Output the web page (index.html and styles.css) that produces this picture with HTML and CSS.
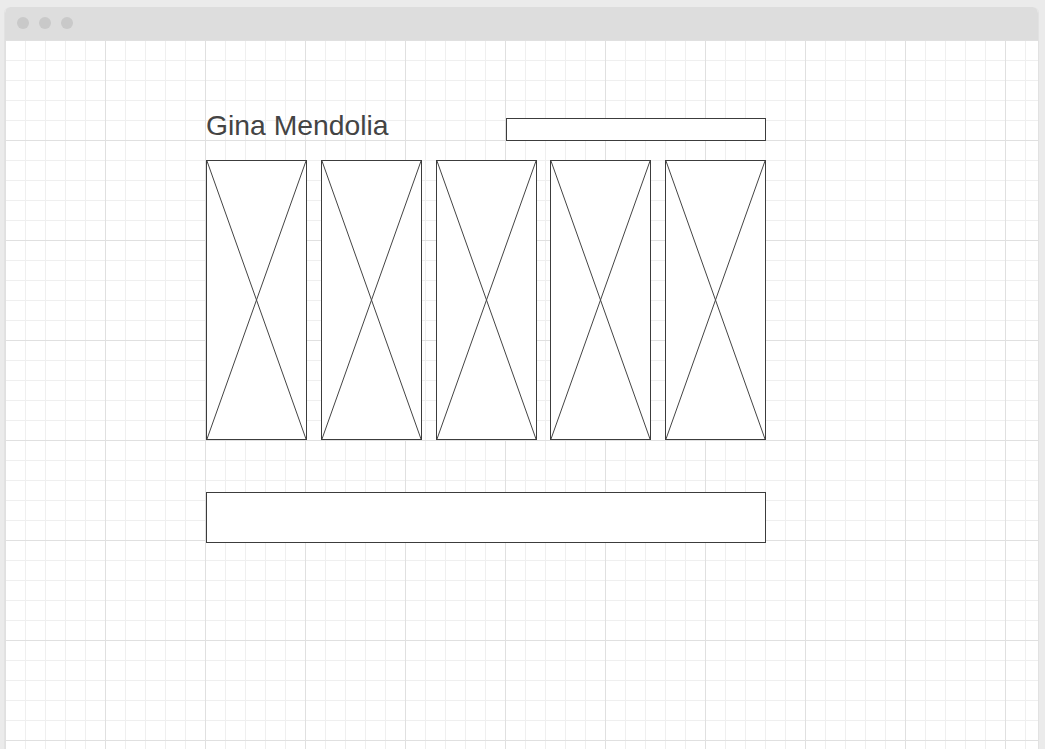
FILE: index.html
```html
<!DOCTYPE html>
<html lang="en">
  <head>
    <meta charset="UTF-8" />
    <meta name="viewport" content="width=device-width, initial-scale=1.0" />
    <title>Gina Mendolia - Wireframe</title>
    <link rel="stylesheet" href="styles.css">
  </head>
  <body>
    <div class="window">
      <div class="titlebar">
        <span class="dot"></span>
        <span class="dot"></span>
        <span class="dot"></span>
      </div>
      <div class="canvas">
        <div class="page">
          <div class="header">
            <h1>Gina Mendolia</h1>
            <div class="search-box"></div>
          </div>
          <div class="gallery">
            <div class="placeholder">
              <svg viewBox="0 0 100 100" preserveAspectRatio="none"><line x1="0" y1="0" x2="100" y2="100" /><line x1="100" y1="0" x2="0" y2="100" /></svg>
            </div>
            <div class="placeholder">
              <svg viewBox="0 0 100 100" preserveAspectRatio="none"><line x1="0" y1="0" x2="100" y2="100" /><line x1="100" y1="0" x2="0" y2="100" /></svg>
            </div>
            <div class="placeholder">
              <svg viewBox="0 0 100 100" preserveAspectRatio="none"><line x1="0" y1="0" x2="100" y2="100" /><line x1="100" y1="0" x2="0" y2="100" /></svg>
            </div>
            <div class="placeholder">
              <svg viewBox="0 0 100 100" preserveAspectRatio="none"><line x1="0" y1="0" x2="100" y2="100" /><line x1="100" y1="0" x2="0" y2="100" /></svg>
            </div>
            <div class="placeholder">
              <svg viewBox="0 0 100 100" preserveAspectRatio="none"><line x1="0" y1="0" x2="100" y2="100" /><line x1="100" y1="0" x2="0" y2="100" /></svg>
            </div>
          </div>
          <div class="footer-box"></div>
        </div>
      </div>
    </div>
  </body>
</html>
```

FILE: styles.css
```css
html,
body {
  height: 100%;
}
body {
  margin: 0;
  padding: 7px 6px 0 4px;
  box-sizing: border-box;
  background-color: #ebebeb;
  font-family: "Liberation Sans", Arial, sans-serif;
  overflow: hidden;
}
.window {
  height: 100%;
  display: flex;
  flex-direction: column;
  border: 1px solid #e2e2e2;
  border-top: none;
  border-radius: 6px 6px 0 0;
  background-color: white;
  overflow: hidden;
}
.titlebar {
  flex: none;
  height: 33px;
  box-sizing: border-box;
  padding: 10px 12px;
  display: flex;
  gap: 10px;
  background-color: #dddddd;
}
.dot {
  width: 12px;
  height: 12px;
  border-radius: 50%;
  background-color: #c9c9c9;
}
.canvas {
  flex: 1;
  padding: 70px 0 0 201px;
  background-color: white;
  background-image:
    linear-gradient(to right, #e0e0e0 1px, transparent 1px),
    linear-gradient(to bottom, #e0e0e0 1px, transparent 1px),
    linear-gradient(to right, #efefef 1px, transparent 1px),
    linear-gradient(to bottom, #efefef 1px, transparent 1px);
  background-size: 100px 100px, 100px 100px, 20px 20px, 20px 20px;
}
.page {
  width: 560px;
}
.header {
  display: flex;
  justify-content: space-between;
  align-items: flex-end;
}
h1 {
  margin: 0;
  font-size: 28.3px;
  font-weight: normal;
  line-height: 31px;
  color: #444;
}
.search-box {
  width: 260px;
  height: 23px;
  box-sizing: border-box;
  border: 1px solid #3c3c3c;
  background-color: white;
}
.gallery {
  margin-top: 19px;
  display: grid;
  grid-template-columns: repeat(5, 101px);
  justify-content: space-between;
}
.placeholder {
  height: 280px;
  box-sizing: border-box;
  border: 1px solid #3c3c3c;
  background-color: white;
}
.placeholder svg {
  display: block;
  width: 100%;
  height: 100%;
}
.placeholder line {
  stroke: #444;
  stroke-width: 1;
  vector-effect: non-scaling-stroke;
}
.footer-box {
  margin-top: 52px;
  height: 51px;
  box-sizing: border-box;
  border: 1px solid #3c3c3c;
  background-color: white;
}
```
